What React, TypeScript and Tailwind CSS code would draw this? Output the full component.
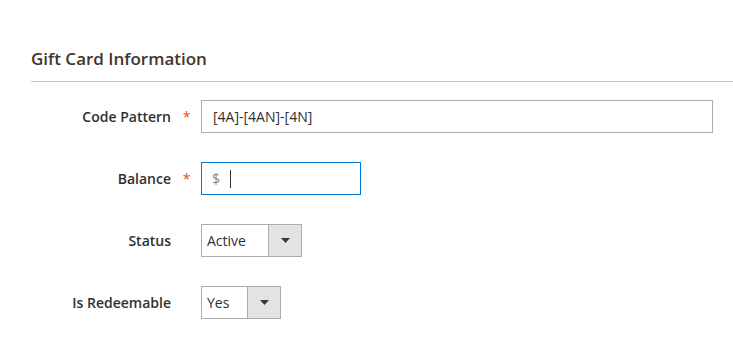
const font = "font-['Open_Sans',sans-serif]";

function Label({ text, required }: { text: string; required?: boolean }) {
  return (
    <>
      <div className="w-[171px] text-right text-[14px] font-semibold text-[#303030]">{text}</div>
      <div className="w-[30px] flex justify-center">
        {required && <span className="text-[14px] text-[#eb5202] pl-[1px]">*</span>}
      </div>
    </>
  );
}

function Select({ value, width, arrowAt }: { value: string; width: string; arrowAt: string }) {
  return (
    <div className={`flex h-[33px] border border-[#adadad] bg-white ${width}`}>
      <div className={`flex items-center pl-[5px] text-[14px] text-[#303030] ${arrowAt}`}>{value}</div>
      <div className="flex-1 flex items-center justify-center bg-[#e3e3e3] border-l border-[#adadad]">
        <svg width="9" height="5" viewBox="0 0 9 5">
          <path d="M0 0h9L4.5 5z" fill="#41362f" />
        </svg>
      </div>
    </div>
  );
}

export default function App() {
  return (
    <div className={`${font} bg-white w-[733px] h-[337px] pt-[45px] overflow-hidden`}>
      {/* Fieldset title */}
      <div className="pl-[31px]">
        <div className="border-b border-[#cac3b4] pb-[9px]">
          <h2 className="text-[17px] leading-[27px] font-semibold text-[#41362f]">Gift Card Information</h2>
        </div>
      </div>

      <div className="flex flex-col gap-[29px] pt-[18px]">
        <div className="flex items-center">
          <Label text="Code Pattern" required />
          <div className="w-[512px] h-[33px] border border-[#adadad] flex items-center pl-[11px] text-[14px] text-[#303030]">
            [4A]-[4AN]-[4N]
          </div>
        </div>

        <div className="flex items-center">
          <Label text="Balance" required />
          <div className="w-[160px] h-[33px] border border-[#007bdb] flex items-center pl-[10px] text-[14px]">
            <span className="text-[#858585]">$</span>
            <span className="ml-[10px] w-px h-[18px] bg-[#303030]" />
          </div>
        </div>

        <div className="flex items-center">
          <Label text="Status" />
          <Select value="Active" width="w-[101px]" arrowAt="w-[66px]" />
        </div>

        <div className="flex items-center">
          <Label text="Is Redeemable" />
          <Select value="Yes" width="w-[80px]" arrowAt="w-[45px]" />
        </div>
      </div>
    </div>
  );
}
